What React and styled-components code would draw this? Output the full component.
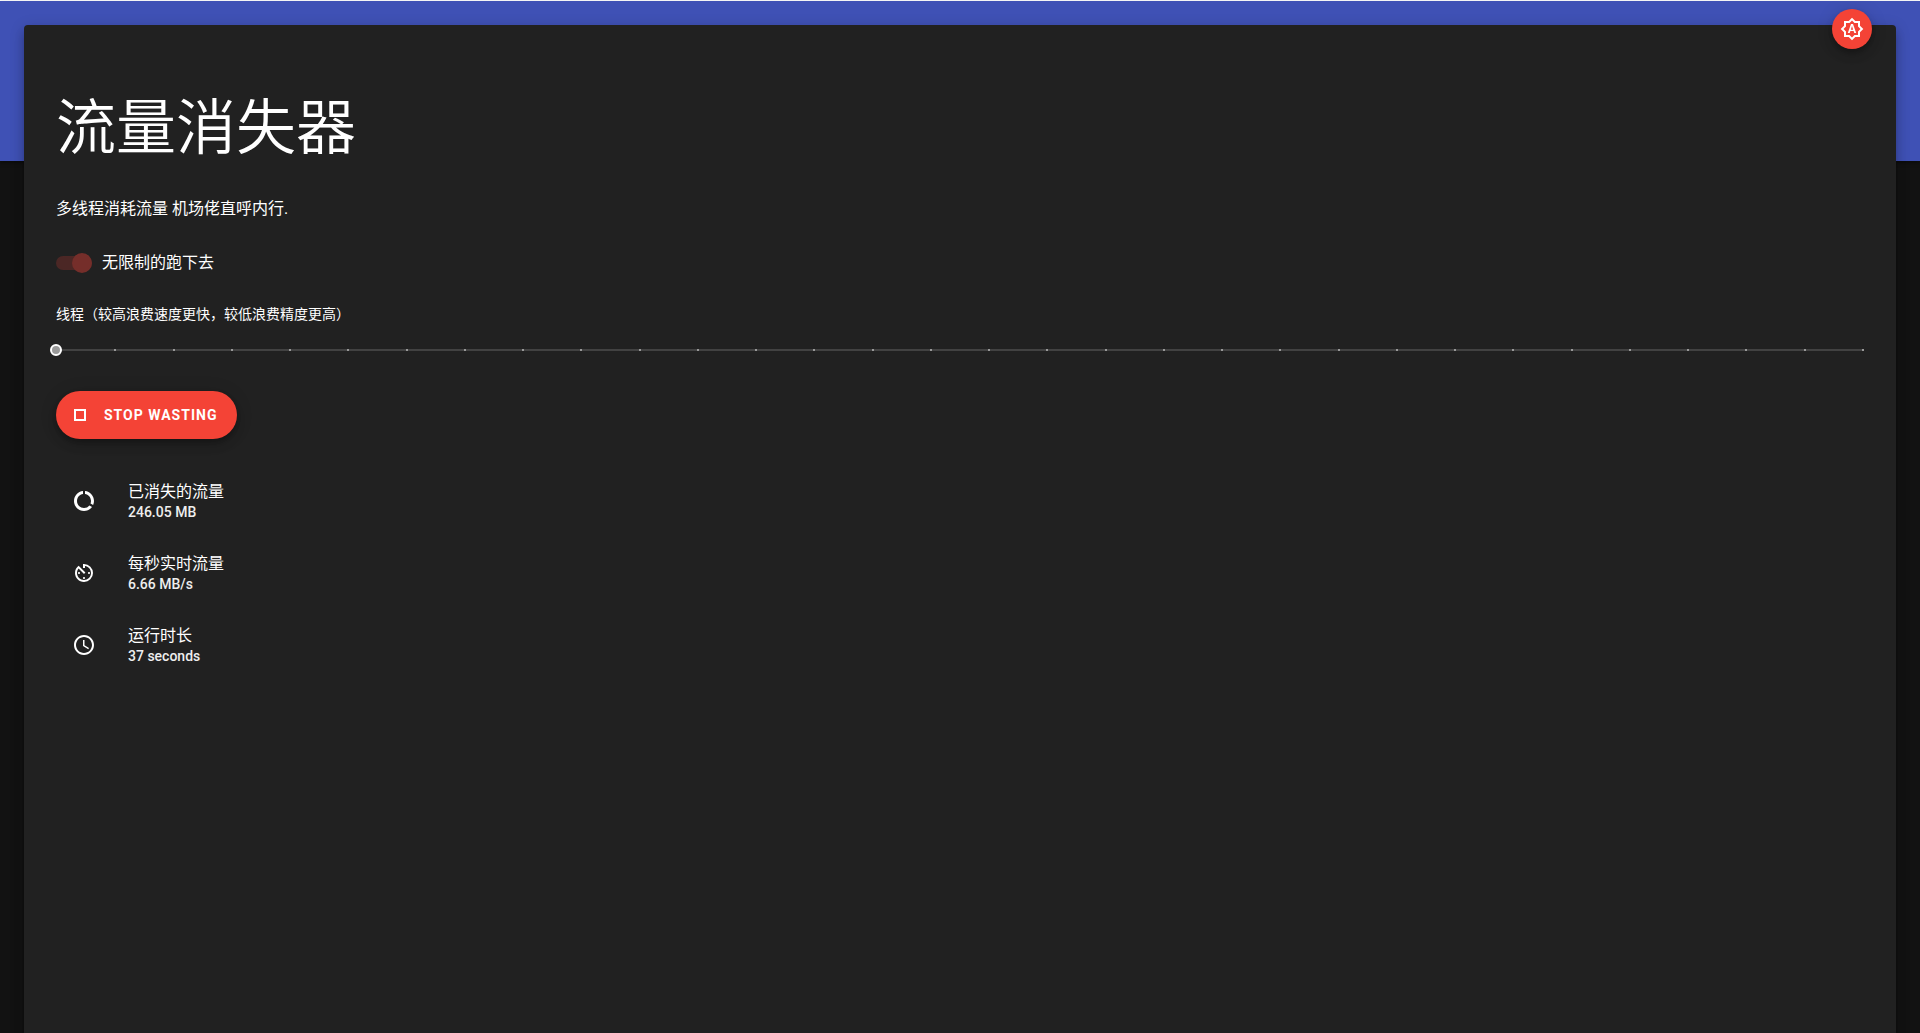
import React, { useState } from 'react';
import styled, { createGlobalStyle } from 'styled-components';
import {
  MdAvTimer,
  MdOutlineAccessTime,
  MdOutlineBrightnessAuto,
  MdOutlineDataUsage,
  MdOutlineStop,
} from 'react-icons/md';

const MIN_THREADS = 1;
const MAX_THREADS = 32;

const GlobalStyle = createGlobalStyle`
  * {
    box-sizing: border-box;
  }

  body {
    margin: 0;
    background-color: #121212;
    color: #fff;
    font-family: Roboto, "Noto Sans CJK SC", sans-serif;
    font-size: 16px;
  }
`;

const Page = styled.div`
  position: relative;
  display: grid;
  grid-template-columns: 24px 1fr 24px;
  grid-template-rows: 24px 136px 1fr;
  min-height: 100vh;
  border-top: 1px solid #fff;
`;

const Banner = styled.header`
  grid-column: 1 / -1;
  grid-row: 1 / 3;
  background-color: #3f51b5;
  box-shadow: 0 2px 4px rgba(0, 0, 0, 0.4);
`;

const Card = styled.main`
  grid-column: 2;
  grid-row: 2 / 4;
  display: flex;
  flex-direction: column;
  align-items: flex-start;
  padding: 74px 32px 32px;
  border-radius: 4px 4px 0 0;
  background-color: #212121;
  box-shadow: 0 5px 5px -3px rgba(0, 0, 0, 0.2),
    0 8px 10px 1px rgba(0, 0, 0, 0.14), 0 3px 14px 2px rgba(0, 0, 0, 0.12);
`;

const ThemeButton = styled.button`
  position: absolute;
  top: 8px;
  right: 48px;
  display: flex;
  align-items: center;
  justify-content: center;
  width: 40px;
  height: 40px;
  padding: 0;
  border: none;
  border-radius: 50%;
  background-color: #f44336;
  color: #fff;
  font-size: 24px;
  cursor: pointer;
  box-shadow: 0 3px 5px -1px rgba(0, 0, 0, 0.2),
    0 6px 10px 0 rgba(0, 0, 0, 0.14), 0 1px 18px 0 rgba(0, 0, 0, 0.12);
`;

const Title = styled.h1`
  margin: 0 0 38px;
  font-size: 60px;
  font-weight: 350;
  line-height: 60px;
`;

const Intro = styled.p`
  margin: 0 0 30px;
  line-height: 24px;
`;

const SwitchLabel = styled.label`
  display: flex;
  align-items: center;
  gap: 10px;
  margin-bottom: 29px;
  line-height: 24px;
`;

const Switch = styled.input`
  appearance: none;
  display: flex;
  align-items: center;
  justify-content: ${({ checked }) => (checked ? 'flex-end' : 'flex-start')};
  width: 36px;
  height: 14px;
  margin: 0;
  border-radius: 7px;
  background-color: #4b2725;

  &::before {
    content: '';
    flex: none;
    width: 20px;
    height: 20px;
    border-radius: 50%;
    background-color: #752e2a;
  }
`;

const SliderLabel = styled.label`
  margin-bottom: 16px;
  font-size: 14px;
  line-height: 20px;
`;

const SliderBox = styled.div`
  display: grid;
  align-items: center;
  align-self: stretch;
  height: 20px;
  margin-bottom: 31px;

  > * {
    grid-area: 1 / 1;
  }
`;

const Ticks = styled.div`
  display: flex;
  justify-content: space-between;
  height: 2px;
  background-color: #424242;
`;

const Tick = styled.span`
  width: 2px;
  height: 2px;
  background-color: #999;
`;

const Slider = styled.input`
  appearance: none;
  height: 20px;
  margin: 0 -6px;
  background: transparent;
  cursor: pointer;

  &::-webkit-slider-thumb {
    appearance: none;
    width: 12px;
    height: 12px;
    border: 2px solid #fff;
    border-radius: 50%;
    background-color: #999;
  }
`;

const StopButton = styled.button`
  display: flex;
  align-items: center;
  gap: 12px;
  height: 48px;
  margin-bottom: 26px;
  padding: 0 20px 0 12px;
  border: none;
  border-radius: 24px;
  background-color: #f44336;
  color: #fff;
  font-family: inherit;
  font-size: 14px;
  font-weight: 700;
  letter-spacing: 1px;
  text-transform: uppercase;
  cursor: pointer;
  box-shadow: 0 3px 5px -1px rgba(0, 0, 0, 0.2),
    0 6px 10px 0 rgba(0, 0, 0, 0.14), 0 1px 18px 0 rgba(0, 0, 0, 0.12);
`;

const StatList = styled.ul`
  margin: 0;
  padding: 0;
  list-style: none;
`;

const StatItem = styled.li`
  display: flex;
  align-items: center;
  gap: 32px;
  height: 72px;
  padding: 0 16px;
`;

const StatText = styled.div`
  padding-top: 2px;
  line-height: 20px;
`;

const StatName = styled.div`
  font-size: 16px;
`;

const StatValue = styled.div`
  color: #eee;
  font-size: 14px;
  font-weight: 500;
`;

const stats = [
  { name: '已消失的流量', value: '246.05 MB', Icon: MdOutlineDataUsage },
  { name: '每秒实时流量', value: '6.66 MB/s', Icon: MdAvTimer },
  { name: '运行时长', value: '37 seconds', Icon: MdOutlineAccessTime },
];

const App = () => {
  const [threads, setThreads] = useState(MIN_THREADS);

  return (
    <>
      <GlobalStyle />
      <Page>
        <Banner />
        <Card>
          <Title>流量消失器</Title>
          <Intro>多线程消耗流量 机场佬直呼内行.</Intro>
          <SwitchLabel>
            <Switch type="checkbox" checked disabled readOnly />
            无限制的跑下去
          </SwitchLabel>
          <SliderLabel htmlFor="threads">
            线程（较高浪费速度更快，较低浪费精度更高）
          </SliderLabel>
          <SliderBox>
            <Ticks>
              {Array.from({ length: MAX_THREADS - MIN_THREADS + 1 }, (_, i) => (
                <Tick key={i} />
              ))}
            </Ticks>
            <Slider
              id="threads"
              type="range"
              min={MIN_THREADS}
              max={MAX_THREADS}
              value={threads}
              onChange={(e) => setThreads(Number(e.target.value))}
            />
          </SliderBox>
          <StopButton type="button">
            <MdOutlineStop size={24} />
            Stop wasting
          </StopButton>
          <StatList>
            {stats.map(({ name, value, Icon }) => (
              <StatItem key={name}>
                <Icon size={24} />
                <StatText>
                  <StatName>{name}</StatName>
                  <StatValue>{value}</StatValue>
                </StatText>
              </StatItem>
            ))}
          </StatList>
        </Card>
        <ThemeButton type="button" aria-label="切换主题">
          <MdOutlineBrightnessAuto />
        </ThemeButton>
      </Page>
    </>
  );
};

export default App;
